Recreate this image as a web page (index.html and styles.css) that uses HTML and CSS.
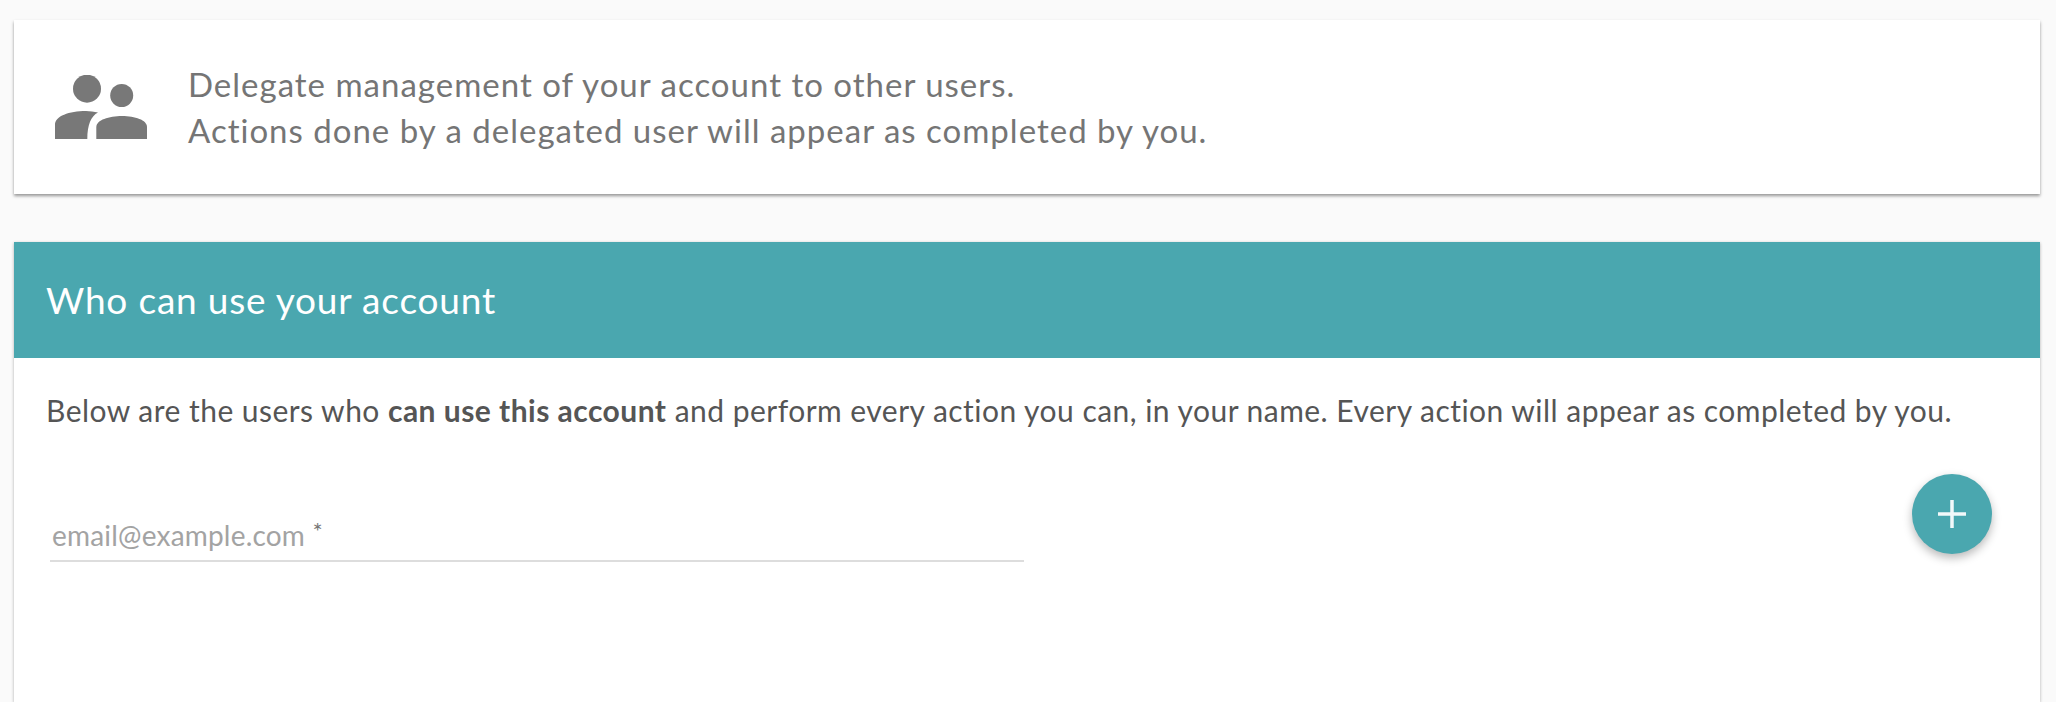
FILE: index.html
```html
<!DOCTYPE html>
<html lang="en">
<head>
<meta charset="utf-8">
<title>Delegate account</title>
<link rel="stylesheet" href="styles.css">
</head>
<body>
<main class="page">
  <section class="card intro">
    <svg class="intro-icon" viewBox="0 0 92 64" width="92" height="64" aria-hidden="true">
      <circle cx="32" cy="13.700" r="14"/>
      <circle cx="66.700" cy="20.500" r="11.500"/>
      <path d="M0 64V50C0 41 14 36 31 36C35 36 39 36.500 43 37.500C36 41 32.300 50 32.300 64Z"/>
      <path d="M41.300 64V52C41.300 45 54 41 67 41C80 41 92 45 92 52V64Z"/>
    </svg>
    <p class="intro-text">Delegate management of your account to other users.<br>Actions done by a delegated user will appear as completed by you.</p>
  </section>
  <section class="card panel">
    <h2 class="panel-title">Who can use your account</h2>
    <div class="panel-body">
      <p class="panel-desc">Below are the users who <strong>can use this account</strong> and perform every action you can, in your name. Every action will appear as completed by you.</p>
      <div class="add-row">
        <div class="field"><span class="field-label">email@example.com <span class="req">*</span></span></div>
        <button class="fab" type="button" aria-label="Add">
          <svg viewBox="0 0 28 28" width="28" height="28" aria-hidden="true"><path d="M0 14H28M14 0V28"/></svg>
        </button>
      </div>
    </div>
  </section>
</main>
</body>
</html>
```
FILE: styles.css
```css
* { box-sizing: border-box; }
html, body { margin: 0; height: 100%; overflow: hidden; }
body { background: #fafafa; font-family: "Lato", "Noto Sans", sans-serif; }
.page { padding: 20px 16px 0 14px; display: flex; flex-direction: column; gap: 48px; }
.card { background: #fff; box-shadow: 0 1px 3px rgba(0,0,0,.3); }
.intro { height: 174px; display: flex; align-items: center; padding-left: 41px; box-shadow: 0 2px 3px rgba(0,0,0,.4); }
.intro-icon { fill: #787878; flex: none; margin-right: 41px; }
.intro-text { margin: 0; font-size: 33px; line-height: 46px; letter-spacing: 1px; color: #757575; }
.panel { height: 460px; }
.panel-title { margin: 0; height: 116px; padding: 0 0 2px 32px; display: flex; align-items: center; background: #4aa7af; color: #fff; font-size: 37px; font-weight: 400; letter-spacing: .8px; }
.panel-body { padding: 32px 48px 0 32px; }
.panel-desc { margin: 0; font-size: 30px; line-height: 40px; letter-spacing: .47px; color: #555; }
.add-row { display: flex; justify-content: space-between; align-items: flex-start; margin-top: 44px; }
.field { width: 974px; height: 76px; margin: 12px 0 0 4px; border-bottom: 2px solid #ddd; padding: 32px 0 0 2px; }
.field-label { font-size: 28px; line-height: 34px; letter-spacing: .2px; color: #a3a3a3; display: block; }
.req { font-size: 24px; line-height: 0; vertical-align: 6px; color: #777; }
.fab { width: 80px; height: 80px; padding: 0; border: 0; border-radius: 50%; background: #4aa7af; box-shadow: 0 4px 10px rgba(0,0,0,.28); display: flex; align-items: center; justify-content: center; }
.fab path { stroke: #f2f9fa; stroke-width: 3.5; fill: none; }
```
